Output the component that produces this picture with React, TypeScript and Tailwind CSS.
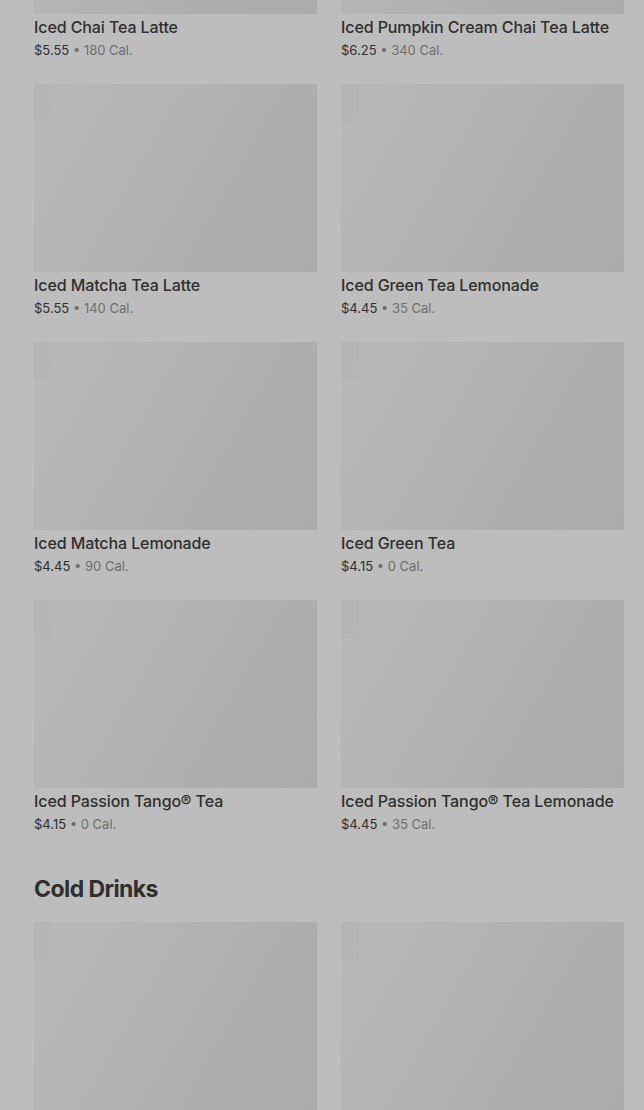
import React from "react";

type Item = { name: string; price: string; cal: string };

const rows: Item[][] = [
  [
    { name: "Iced Chai Tea Latte", price: "$5.55", cal: "180 Cal." },
    { name: "Iced Pumpkin Cream Chai Tea Latte", price: "$6.25", cal: "340 Cal." },
  ],
  [
    { name: "Iced Matcha Tea Latte", price: "$5.55", cal: "140 Cal." },
    { name: "Iced Green Tea Lemonade", price: "$4.45", cal: "35 Cal." },
  ],
  [
    { name: "Iced Matcha Lemonade", price: "$4.45", cal: "90 Cal." },
    { name: "Iced Green Tea", price: "$4.15", cal: "0 Cal." },
  ],
  [
    { name: "Iced Passion Tango® Tea", price: "$4.15", cal: "0 Cal." },
    { name: "Iced Passion Tango® Tea Lemonade", price: "$4.45", cal: "35 Cal." },
  ],
];

function Placeholder() {
  return (
    <div className="relative h-[188px] w-full overflow-hidden bg-[linear-gradient(120deg,#b9b9b9_0%,#b3b3b3_40%,#adadad_75%,#ababab_100%)]">
      <div className="absolute left-0 top-0 h-[38px] w-[18px] bg-[#b1b1b1] opacity-50" />
    </div>
  );
}

function Card({ item }: { item: Item }) {
  return (
    <div className="flex flex-col">
      <Placeholder />
      <div className="pt-[3px] text-[16px] leading-5 font-medium tracking-[-0.1px] text-[#2f2f2f] whitespace-nowrap">
        {item.name}
      </div>
      <div className="mt-[3px] text-[13px] leading-5 whitespace-nowrap">
        <span className="text-[#2f2f2f]">{item.price}</span>
        <span className="text-[#6e6e6e]"> • {item.cal}</span>
      </div>
    </div>
  );
}

export default function App() {
  return (
    <div
      className="h-[1110px] w-[644px] overflow-hidden bg-[#bdbdbd]"
      style={{ fontFamily: "Inter, 'Liberation Sans', sans-serif" }}
    >
      <div className="-mt-[174px] pl-[34px] pr-[20px]">
        <div className="flex flex-col gap-6">
          {rows.map((r, i) => (
            <div key={i} className="grid grid-cols-2 gap-x-6">
              {r.map((it) => (
                <Card key={it.name} item={it} />
              ))}
            </div>
          ))}
        </div>
        <h2 className="mt-[41px] text-[23px] leading-7 font-bold tracking-tight text-[#2f2f2f]">Cold Drinks</h2>
        <div className="mt-[19px] grid grid-cols-2 gap-x-6">
          <Placeholder />
          <Placeholder />
        </div>
      </div>
    </div>
  );
}
